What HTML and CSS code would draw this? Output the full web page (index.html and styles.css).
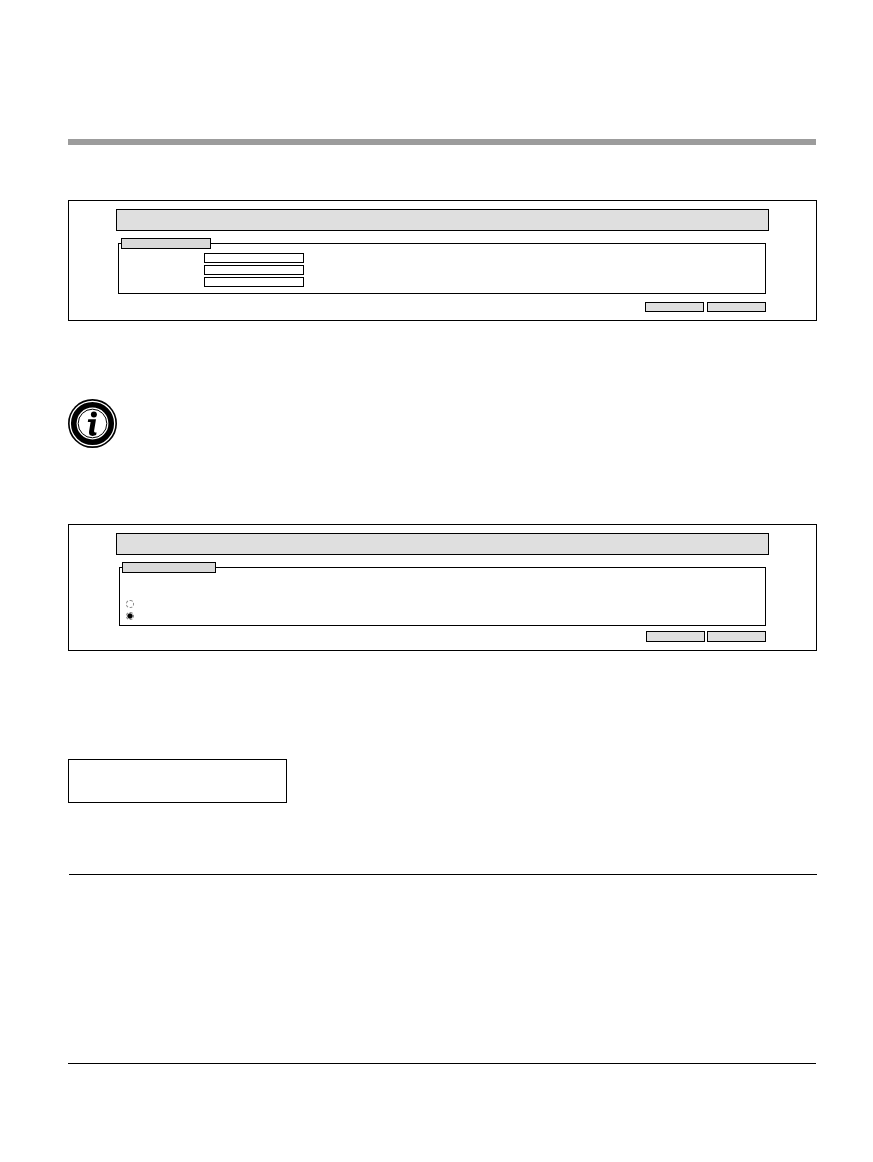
FILE: index.html
```
<!DOCTYPE html>
<html lang="en">
<head>
  <meta charset="utf-8">
  <meta name="viewport" content="width=device-width, initial-scale=1.0">
  <title>Settings</title>
  <link rel="stylesheet" href="styles.css">
</head>
<body>
  <header class="page-header"></header>

  <main>
    <form class="panel">
      <div class="panel-title"></div>
      <fieldset>
        <legend></legend>
        <div class="field">
          <label for="value-1"></label>
          <input type="text" id="value-1" aria-label="Value 1">
        </div>
        <div class="field">
          <label for="value-2"></label>
          <input type="text" id="value-2" aria-label="Value 2">
        </div>
        <div class="field">
          <label for="value-3"></label>
          <input type="text" id="value-3" aria-label="Value 3">
        </div>
      </fieldset>
      <div class="actions">
        <button type="submit" aria-label="Apply"></button>
        <button type="reset" aria-label="Cancel"></button>
      </div>
    </form>

    <div class="note">
      <svg class="note-icon" viewBox="0 0 49 49" role="img" aria-label="Information">
        <circle cx="24.5" cy="24.5" r="24.5" fill="#000"/>
        <circle cx="24.5" cy="24.5" r="22.2" fill="none" stroke="#fff" stroke-width="1.3"/>
        <circle cx="24.5" cy="24.5" r="15.9" fill="#fff"/>
        <circle cx="24.5" cy="24.5" r="14.3" fill="none" stroke="#000" stroke-width="1"/>
        <circle cx="25.9" cy="15.6" r="3" fill="#000"/>
        <path d="M20.2 20.3h7.8l-1.9 11.5q-.2 1.7 1 1.7h1.5l-.5 2.6q-1.6.8-3.5.8-4.3 0-3.5-4.6l1.5-9.2h-2.8z" fill="#000"/>
      </svg>
    </div>

    <form class="panel panel-options">
      <div class="panel-title"></div>
      <fieldset>
        <legend></legend>
        <div class="options">
          <input type="radio" name="mode" aria-label="Option 1">
          <input type="radio" name="mode" aria-label="Option 2" checked>
        </div>
      </fieldset>
      <div class="actions">
        <button type="submit" aria-label="Apply"></button>
        <button type="reset" aria-label="Cancel"></button>
      </div>
    </form>

    <div class="box"></div>
    <hr class="section-rule">
  </main>

  <footer class="page-footer"></footer>
</body>
</html>
```
FILE: styles.css
```
* {
  box-sizing: border-box;
}
body {
  margin: 0;
  padding: 139px 56px 0 68px;
  background-color: #fff;
  font-family: "Liberation Sans", Arial, sans-serif;
  font-size: 8px;
}
.page-header {
  height: 6px;
  margin: 0 1px 55px 0;
  background-color: #9c9c9c;
}

/* panels */
.panel {
  padding: 8px 47px;
  border: 1px solid #000;
}
.panel-title {
  height: 22px;
  margin-bottom: 7px;
  border: 1px solid #000;
  background-color: #dfdfdf;
}
fieldset {
  display: block;
  min-width: 0;
  margin: 0 3px 8px 2px;
  padding: 4px 2px 6px;
  border: 1px solid #000;
}
legend {
  width: 90px;
  height: 11px;
  padding: 0;
  border: 1px solid #000;
  background-color: #d9d9d9;
}
.field {
  display: flex;
}
.field + .field {
  margin-top: 2px;
}
.field label {
  width: 83px;
}
.field input {
  width: 100px;
  height: 10px;
  padding: 0 2px;
  border: 1px solid #000;
  border-radius: 0;
  background-color: #fff;
  font-size: 7px;
}
.actions {
  display: flex;
  justify-content: flex-end;
  gap: 3px;
  margin-right: 3px;
}
.actions button {
  width: 59px;
  height: 10px;
  padding: 0;
  border: 1px solid #000;
  border-radius: 0;
  background-color: #dfdfdf;
}

.panel-options fieldset {
  margin: 0 3px 5px;
  padding: 27px 2px 5px;
}
.panel-options legend {
  width: 94px;
}
.panel-options .actions {
  gap: 2px;
}
.panel-options button {
  height: 11px;
}
.options {
  display: flex;
  flex-direction: column;
  gap: 4px;
  padding-left: 4px;
}
.options input {
  appearance: none;
  width: 8px;
  height: 8px;
  margin: 0;
  border: 1px dashed #888;
  border-radius: 50%;
}
.options input:checked {
  background: radial-gradient(circle, #000 2px, #aaa 3px);
  background-clip: padding-box;
}

/* note */
.note {
  display: flex;
  margin: 78px 0 76px;
}
.note-icon {
  width: 49px;
  height: 49px;
}

.box {
  width: 219px;
  max-width: 100%;
  height: 44px;
  margin-top: 108px;
  border: 1px solid #000;
}
.section-rule {
  margin: 71px 0 188px 1px;
  border: 0;
  border-top: 1px solid #000;
}
.page-footer {
  margin-right: 1px;
  border-top: 1px solid #000;
}
```
